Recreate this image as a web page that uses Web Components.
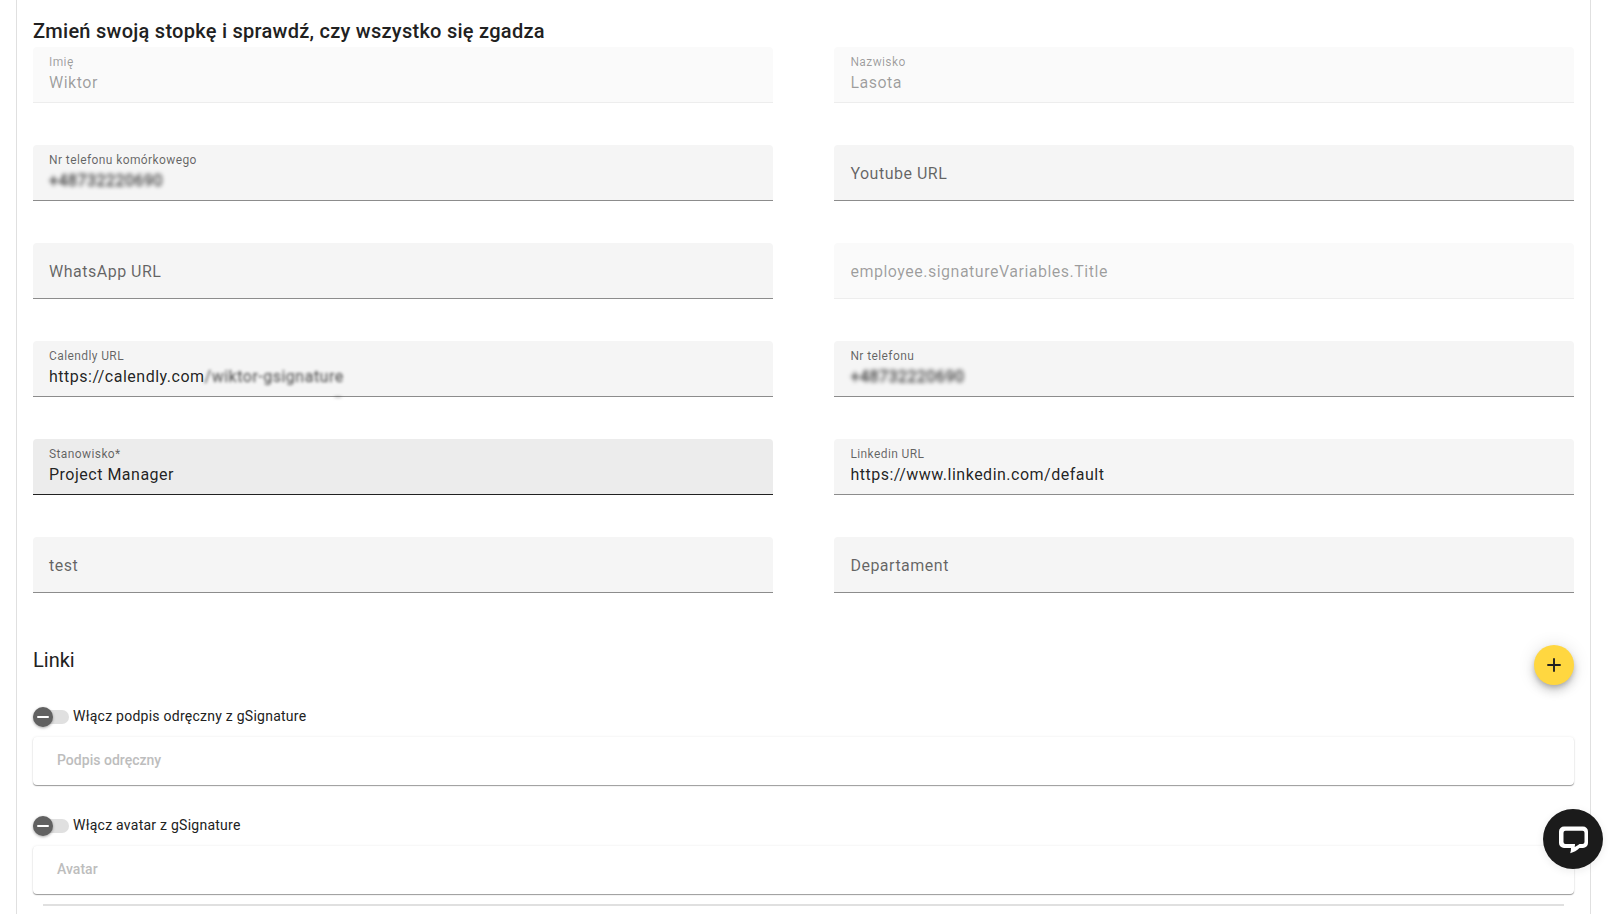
<!DOCTYPE html>
<html lang="pl"><head><meta charset="utf-8"><title>Stopka</title>
<style>
html,body{margin:0;padding:0;height:914px;overflow:hidden;background:#fff;font-family:Roboto,"Liberation Sans",sans-serif;color:#212121}
</style></head><body>
<x-panel>
  <x-heading slot="title" size="20" weight="500" spacing=".265">Zmień swoją stopkę i sprawdź, czy wszystko się zgadza</x-heading>
  <x-field label="Imię" value="Wiktor" state="disabled"></x-field>
  <x-field label="Nazwisko" value="Lasota" state="disabled"></x-field>
  <x-field label="Nr telefonu komórkowego"><x-blur slot="value">+48732220690</x-blur></x-field>
  <x-field placeholder="Youtube URL"></x-field>
  <x-field placeholder="WhatsApp URL"></x-field>
  <x-field placeholder="employee.signatureVariables.Title" state="disabled"></x-field>
  <x-field label="Calendly URL" value="https://calendly.com"><x-blur slot="value" tone="light" radius="1.6">/wiktor-gsignature</x-blur></x-field>
  <x-field label="Nr telefonu"><x-blur slot="value">+48732220690</x-blur></x-field>
  <x-field label="Stanowisko*" value="Project Manager" state="hover"></x-field>
  <x-field label="Linkedin URL" value="https://www.linkedin.com/default"></x-field>
  <x-field placeholder="test"></x-field>
  <x-field placeholder="Departament"></x-field>
  <x-links slot="after">
    <x-heading size="20" weight="400" spacing="0">Linki</x-heading>
    <x-fab slot="action" aria-label="Dodaj"></x-fab>
  </x-links>
  <x-option slot="after" label="Włącz podpis odręczny z gSignature" name="Podpis odręczny"></x-option>
  <x-option slot="after" last label="Włącz avatar z gSignature" name="Avatar"></x-option>
  <x-rule slot="after"></x-rule>
</x-panel>
<x-chat></x-chat>
<script>
function def(name, html, init){
  customElements.define(name, class extends HTMLElement{
    constructor(){super();const r=this.attachShadow({mode:'open'});r.innerHTML=html;}
    connectedCallback(){init&&init.call(this,this.shadowRoot);}
  });
}
def('x-panel',`<style>
:host{display:block;box-sizing:border-box;margin-left:16px;width:1575px;height:914px;padding:0 16px;border-left:1px solid #e0e0e0;border-right:1px solid #e0e0e0;overflow:hidden}
.title{display:block;height:47px;padding-top:18px;box-sizing:border-box}
.grid{display:grid;grid-template-columns:740px 739.6px;column-gap:61.4px;row-gap:42px}
</style><div class="title"><slot name="title"></slot></div><div class="grid"><slot></slot></div><slot name="after"></slot>`);
def('x-heading',`<style>:host{display:block;font-family:Roboto,sans-serif;color:#212121;line-height:26px}</style><slot></slot>`,function(r){
  this.style.fontSize=this.getAttribute('size')+'px';this.style.fontWeight=this.getAttribute('weight');this.style.letterSpacing=this.getAttribute('spacing')+'px';});
def('x-field',`<style>
:host{display:flex;flex-direction:column;box-sizing:border-box;height:56px;padding:0 16px;background:#f5f5f5;border-bottom:1px solid #8c8c8c;border-radius:4px 4px 0 0;font-family:Roboto,sans-serif;position:relative}
:host([state=hover]){background:#ececec;border-bottom-color:#212121}
:host([state=disabled]){background:#fafafa;border-bottom-color:#ededed}
.label{font-size:12px;line-height:14px;letter-spacing:.4px;color:rgba(0,0,0,.6);margin-top:8px}
.val{font-size:16px;line-height:20px;letter-spacing:.5px;color:rgba(0,0,0,.87);margin-top:4px;white-space:nowrap}
.ph{font-size:16px;line-height:20px;letter-spacing:.5px;color:rgba(0,0,0,.6);margin-top:19px}
:host([state=disabled]) .label,:host([state=disabled]) .val,:host([state=disabled]) .ph{color:rgba(0,0,0,.38)}
[hidden]{display:none}
</style><div class="label"></div><div class="val"><span class="v"></span><slot name="value"></slot></div><div class="ph"></div>`,function(r){
  const l=this.getAttribute('label'),v=this.getAttribute('value'),p=this.getAttribute('placeholder');
  r.querySelector('.label').textContent=l||'';r.querySelector('.label').hidden=!l;
  r.querySelector('.v').textContent=v||'';r.querySelector('.val').hidden=!!p;
  r.querySelector('.ph').textContent=p||'';r.querySelector('.ph').hidden=!p;
});
def('x-blur',`<style>:host{display:inline-block;position:relative;color:rgba(0,0,0,.8);-webkit-text-stroke:.4px rgba(0,0,0,.5);filter:blur(1.9px)}:host([tone=light]){color:rgba(0,0,0,.6);-webkit-text-stroke:.3px rgba(0,0,0,.4)}
:host([tone=light])::after{content:"";position:absolute;left:129px;top:29px;width:8px;height:2px;border-radius:50%;background:rgba(0,0,0,.22)}</style><slot></slot>`,function(){
  const b=this.getAttribute('radius');if(b)this.style.filter='blur('+b+'px)';});
def('x-links',`<style>:host{display:flex;justify-content:space-between;align-items:flex-start;height:114px;box-sizing:border-box;padding-top:52px}::slotted(x-heading){margin-top:2px}</style><slot></slot><slot name="action"></slot>`);
def('x-fab',`<style>:host{display:flex;align-items:center;justify-content:center;width:40px;height:40px;border-radius:50%;background:#ffd740;box-shadow:0 3px 5px -1px rgba(0,0,0,.2),0 6px 10px 0 rgba(0,0,0,.14),0 1px 18px 0 rgba(0,0,0,.12)}svg{display:block}</style>
<svg width="16" height="16" viewBox="0 0 16 16"><path d="M8 1.3v13.4M1.3 8h13.4" stroke="#212121" stroke-width="1.9" fill="none"/></svg>`);
def('x-option',`<style>
:host{display:block;height:78px;margin-bottom:31px;font-family:Roboto,sans-serif}
:host([last]){margin-bottom:10px}
.row{display:flex;align-items:center;height:20px;gap:4px}
.sw{position:relative;width:36px;height:14px;background:#e0e0e0;border-radius:7px}
.th{position:absolute;left:0;top:-3px;width:20px;height:20px;border-radius:50%;background:#616161;box-shadow:0 1px 3px rgba(0,0,0,.35);display:flex;align-items:center;justify-content:center}
.th i{display:block;width:12px;height:2px;background:#fff;border-radius:1px}
.t{font-size:14px;letter-spacing:.25px;color:#212121;line-height:20px;padding-bottom:2px}
.card{margin-top:10px;height:48px;box-sizing:border-box;background:#fff;border-radius:4px;padding:0 24px 2px;display:flex;align-items:center;font-size:14px;font-weight:500;letter-spacing:.02px;color:#bdbdbd;box-shadow:0 1px 1px rgba(0,0,0,.38),0 0 3px rgba(0,0,0,.08)}
</style><div class="row"><div class="sw"><div class="th"><i></i></div></div><div class="t"></div></div><div class="card"></div>`,function(r){
  r.querySelector('.t').textContent=this.getAttribute('label');r.querySelector('.card').textContent=this.getAttribute('name');});
def('x-rule',`<style>:host{display:block;height:2px;margin:0 10px;background:#e0e0e0}</style>`);
def('x-chat',`<style>:host{position:fixed;left:1543px;top:809px;width:60px;height:60px;border-radius:50%;background:#1b1b1b;box-shadow:0 2px 8px rgba(0,0,0,.08);display:block}svg{display:block}</style>
<svg width="60" height="60" viewBox="0 0 60 60"><path fill="#fff" fill-rule="evenodd" d="M21 17.500h19a5 5 0 0 1 5 5V34a5 5 0 0 1-5 5h-3.500c-2.600 2.600-5.600 4.300-9.300 5.200.6-1.600.8-3.300.8-5.200H21a5 5 0 0 1-5-5V22.500a5 5 0 0 1 5-5zM22.500 21.800a2 2 0 0 0-2 2V33a2 2 0 0 0 2 2h9.500c0 1.100-.1 2-.3 3 2-.9 3.500-1.800 4.800-3h3a2 2 0 0 0 2-2v-9.200a2 2 0 0 0-2-2z"/></svg>`);
</script>
</body></html>
